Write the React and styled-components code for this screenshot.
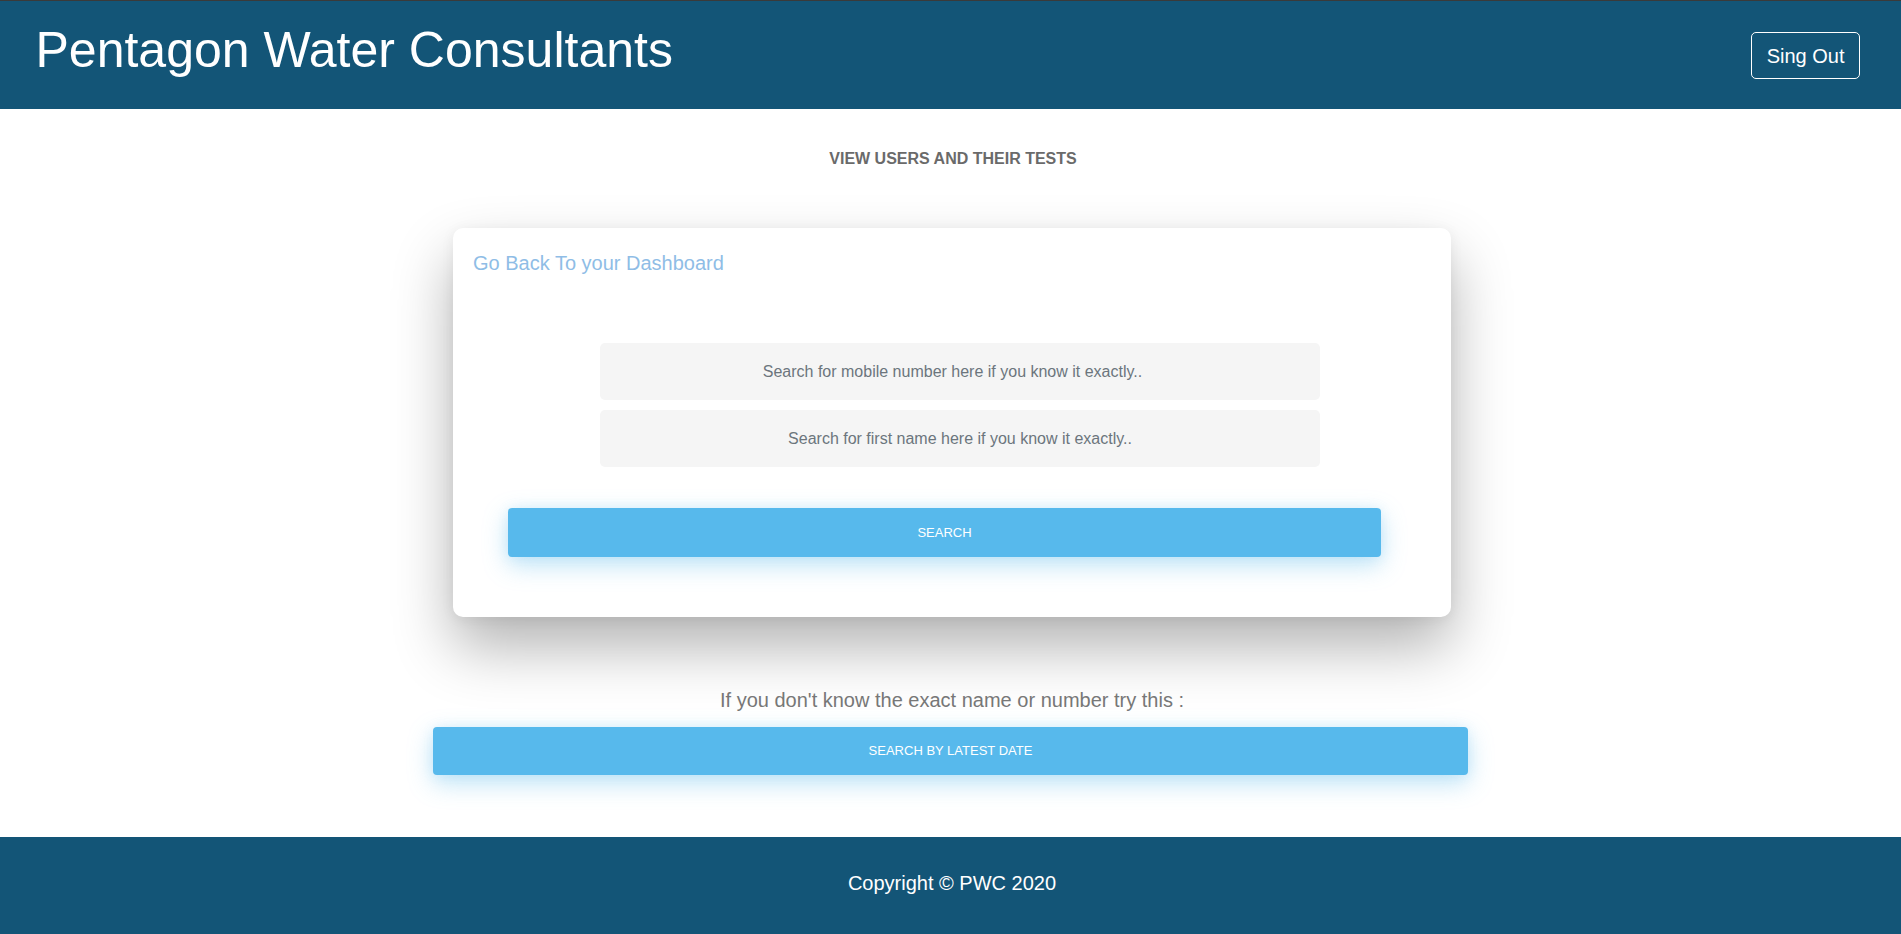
import React from "react";
import styled, { createGlobalStyle } from "styled-components";

const Global = createGlobalStyle`
  * { box-sizing: border-box; }
  html, body { margin: 0; padding: 0; background: #ffffff; }
  body { font-family: "Liberation Sans", Arial, sans-serif; }
`;

const Header = styled.header`
  display: flex;
  align-items: flex-start;
  justify-content: space-between;
  height: 109px;
  padding: 0 41px 0 35.5px;
  background: #135577;
  border-top: 1px solid #3a3a3a;
`;

const Brand = styled.h1`
  margin: 21px 0 0;
  font-size: 50px;
  font-weight: 400;
  line-height: 1.15;
  color: #ffffff;
`;

const OutlineButton = styled.button`
  margin-top: 31px;
  padding: 7.5px 14.5px;
  border: 1px solid #ffffff;
  border-radius: 5px;
  background: transparent;
  color: #ffffff;
  font-family: "Liberation Sans", Arial, sans-serif;
  font-size: 20px;
  line-height: 30px;
  cursor: pointer;
`;

const Main = styled.main`
  display: flex;
  flex-direction: column;
  align-items: center;
  padding: 40px 0 61.5px;
`;

const PageTitle = styled.h2`
  margin: 0 0 0 5px;
  font-size: 16px;
  line-height: 19px;
  font-weight: 700;
  color: #6a6a6a;
  text-transform: uppercase;
`;

const Card = styled.section`
  width: 998px;
  margin: 60px 0 0 3px;
  padding: 23px 20px 60px;
  background: #ffffff;
  border-radius: 10px;
  box-shadow: 0 30px 60px rgba(0, 0, 0, 0.3), 0 2px 14px rgba(0, 0, 0, 0.06);
  display: flex;
  flex-direction: column;
`;

const BackLink = styled.a`
  align-self: flex-start;
  font-size: 20px;
  line-height: 24px;
  color: #8fbde6;
  text-decoration: none;
  margin-bottom: 68px;
  cursor: pointer;
`;

const Fields = styled.div`
  display: flex;
  flex-direction: column;
  gap: 10px;
  width: 720px;
  margin-left: 127px;
`;

const Field = styled.input`
  height: 57px;
  width: 100%;
  padding: 0 ${(p) => p.$padRight || 0}px 0 0;
  border: none;
  border-radius: 5px;
  background: #f5f5f5;
  text-align: center;
  font-family: "Liberation Sans", Arial, sans-serif;
  font-size: 16px;
  color: #495057;
  outline: none;
  &::placeholder { color: #6c757d; }
`;

const PrimaryButton = styled.button`
  display: block;
  width: ${(p) => p.$width}px;
  margin: ${(p) => p.$margin};
  padding: 14.5px 0;
  border: none;
  border-radius: 4px;
  background: #57b9ec;
  color: #ffffff;
  font-family: "Liberation Sans", Arial, sans-serif;
  font-size: 13px;
  line-height: 19.5px;
  text-transform: uppercase;
  box-shadow: 0 8px 24px rgba(87, 185, 236, 0.4), 0 0 12px rgba(87, 185, 236, 0.12);
  cursor: pointer;
`;

const Hint = styled.p`
  margin: 71px 0 0 3px;
  font-size: 20px;
  line-height: 24px;
  color: #777777;
`;

const Footer = styled.footer`
  height: 97px;
  padding: 34px 0 0 3px;
  background: #135577;
  color: #ffffff;
  text-align: center;
  font-size: 20px;
  line-height: 24px;
`;

export default function App() {
  return (
    <>
      <Global />
      <Header>
        <Brand>Pentagon Water Consultants</Brand>
        <OutlineButton>Sing Out</OutlineButton>
      </Header>
      <Main>
        <PageTitle>View users and their tests</PageTitle>
        <Card>
          <BackLink>Go Back To your Dashboard</BackLink>
          <Fields>
            <Field $padRight={15} placeholder="Search for mobile number here if you know it exactly.." />
            <Field placeholder="Search for first name here if you know it exactly.." />
          </Fields>
          <PrimaryButton $width={873} $margin="41px 0 0 35px">Search</PrimaryButton>
        </Card>
        <Hint>If you don't know the exact name or number try this :</Hint>
        <PrimaryButton $width={1035} $margin="15px 0 0 0">Search by latest date</PrimaryButton>
      </Main>
      <Footer>Copyright © PWC 2020</Footer>
    </>
  );
}
